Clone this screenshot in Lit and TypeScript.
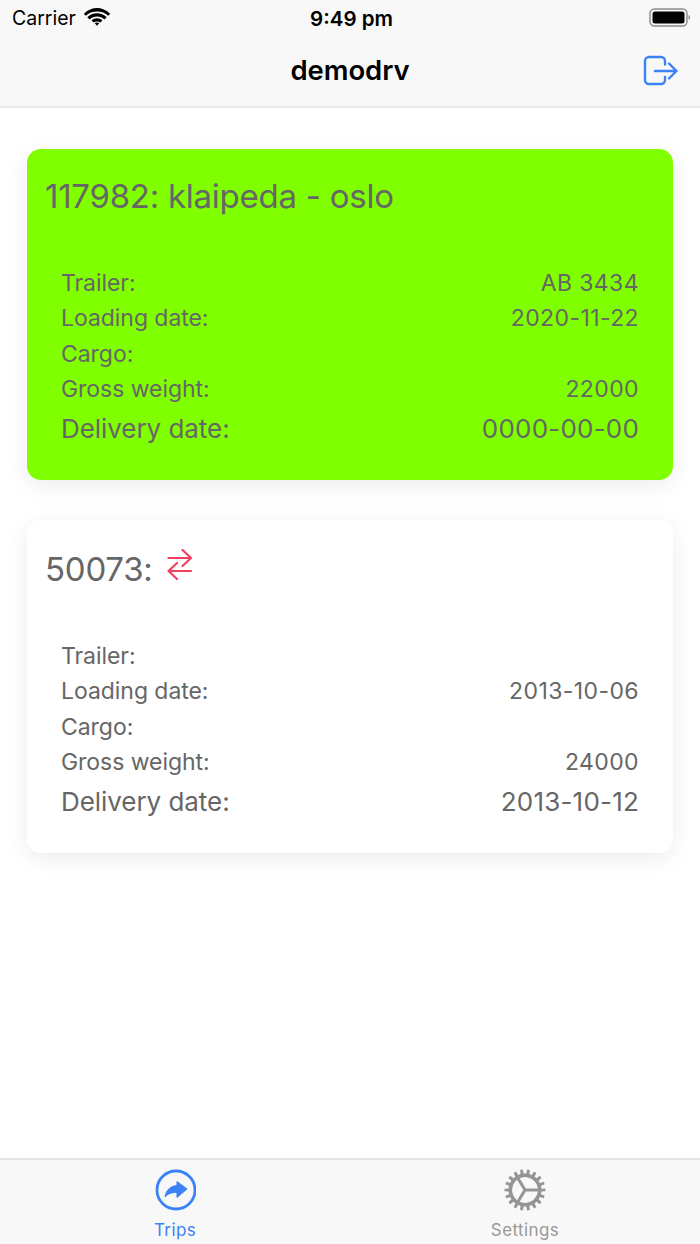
import { LitElement, html, css, svg } from "lit";
import { customElement } from "lit/decorators.js";

interface Trip { title: string; swap?: boolean; green?: boolean; trailer: string; loading: string; cargo: string; gross: string; delivery: string; }

const trips: Trip[] = [
  { title: "117982: klaipeda - oslo", green: true, trailer: "AB 3434", loading: "2020-11-22", cargo: "", gross: "22000", delivery: "0000-00-00" },
  { title: "50073:", swap: true, trailer: "", loading: "2013-10-06", cargo: "", gross: "24000", delivery: "2013-10-12" },
];

function gearPath(): string {
  const cx = 21, cy = 21, n = 18, ro = 20.5, ri = 16.5;
  let d = "";
  for (let i = 0; i < n; i++) {
    const a = (i / n) * Math.PI * 2;
    const w = Math.PI / n;
    const pts: [number, number][] = [
      [ri, a - w * 0.55], [ro, a - w * 0.38], [ro, a + w * 0.38], [ri, a + w * 0.55],
    ];
    for (const [r, t] of pts) {
      d += `${d ? "L" : "M"}${(cx + r * Math.cos(t)).toFixed(2)} ${(cy + r * Math.sin(t)).toFixed(2)}`;
    }
  }
  return d + "Z";
}

@customElement("app-root")
export class AppRoot extends LitElement {
  static styles = css`
    :host { display: flex; flex-direction: column; width: 700px; height: 1244px; background: #fff; font-family: Inter, "Liberation Sans", sans-serif; overflow: hidden; }
    .status { height: 40px; flex: none; background: #f8f8f8; display: grid; grid-template-columns: 1fr auto 1fr; align-items: center; padding: 0 9px 4px 12px; box-sizing: border-box; color: #000; }
    .status-left { display: flex; align-items: center; gap: 8px; font-size: 19.5px; }
    .wifi { margin-top: -2px; }
    .time { font-size: 20.5px; font-weight: 600; }
    .status-right { display: flex; justify-content: flex-end; }
    .battery { margin-top: -1px; }
    .nav { height: 68px; flex: none; box-sizing: border-box; background: #f8f8f8; border-bottom: 2px solid #e8e8e8; display: flex; align-items: center; justify-content: center; position: relative; padding-bottom: 6px; }
    .nav h1 { margin: 0; font-size: 27.5px; font-weight: 600; color: #000; letter-spacing: -0.1px; }
    .logout { position: absolute; right: 21px; top: 15px; }
    .main { flex: 1; display: flex; flex-direction: column; gap: 40px; padding: 41px 27px 0; }
    .card { height: 331px; flex: none; box-sizing: border-box; border-radius: 14px; background: #fff; box-shadow: 0 5px 22px rgba(0,0,0,0.08); padding: 26px 34px 0 18px; color: #666; }
    .card.green { background: #80ff00; }
    .card.plain { height: 333px; padding-top: 27px; }
    .title { margin: 0; height: 42px; display: flex; align-items: center; gap: 14px; font-size: 33px; font-weight: 400; letter-spacing: -0.25px; white-space: nowrap; }
    .card.plain .title { height: 44px; }
    .swap { flex: none; margin-top: -8px; }
    .rows { margin: 48px 0 0 16px; display: flex; flex-direction: column; }
    .card.plain .rows { margin-top: 47px; }
    .row { height: 35.5px; display: flex; justify-content: space-between; align-items: center; font-size: 23px; letter-spacing: -0.05px; }
    .row span:last-child { letter-spacing: 0.4px; }
    .row.big { height: 43px; font-size: 26px; letter-spacing: 0; }
    .row.big span:first-child { letter-spacing: -0.05px; }
    .row.big span:last-child { letter-spacing: 0.2px; }
    .tabs { height: 86px; flex: none; box-sizing: border-box; background: #f8f8f8; border-top: 2px solid #e4e4e4; display: grid; grid-template-columns: 1fr 1fr; }
    .tab { display: flex; flex-direction: column; align-items: center; padding-top: 9px; font-size: 17px; font-weight: 400; letter-spacing: 0.4px; color: #999; }
    .tab.on { color: #3b82f6; }
    .tab svg { display: block; margin-bottom: 9px; }
  `;

  private row(label: string, value: string, big = false) {
    return html`<div class="row ${big ? "big" : ""}"><span>${label}</span><span>${value}</span></div>`;
  }

  render() {
    return html`
      <div class="status">
        <div class="status-left"><span>Carrier</span>
          <svg class="wifi" width="26" height="18" viewBox="0 0 26 18" fill="#000">
            <path d="M13 3.500C8.600 3.500 4.600 5 1.800 7.800L.4 6.400C0 6 0 5.600.4 5.200 3.700 2 8.300 0 13 0s9.300 2 12.600 5.200c.4.4.4.8 0 1.200l-1.400 1.400C21.400 5 17.400 3.500 13 3.500Z"/>
            <path d="M13 8.600c-2.900 0-5.500 1.100-7.500 2.900L3.300 9.200C5.900 6.800 9.300 5.300 13 5.300s7.100 1.500 9.700 3.900l-2.200 2.300C18.500 9.700 15.900 8.600 13 8.600Z"/>
            <path d="M13 10.300c-2.100 0-4 .8-5.400 2.100l2.100 2.200c.9-.7 2-1.100 3.300-1.100s2.400.4 3.300 1.100l2.100-2.200C17 11.100 15.100 10.300 13 10.300Z"/>
            <path d="M13 14.500c-.9 0-1.600.3-2.200.8l2.200 2.400 2.200-2.400c-.6-.5-1.300-.8-2.200-.8Z"/>
          </svg>
        </div>
        <div class="time">9:49 pm</div>
        <div class="status-right">
          <svg class="battery" width="42" height="20" viewBox="0 0 42 20">
            <rect x="1" y="1" width="37" height="17" rx="4.500" fill="none" stroke="#8a8a8a" stroke-width="1.400"/>
            <rect x="3.500" y="3.500" width="32" height="12" rx="2.500" fill="#000"/>
            <path d="M39.500 7v5c1-.4 1.500-1.400 1.500-2.500S40.500 7.400 39.500 7Z" fill="#8a8a8a"/>
          </svg>
        </div>
      </div>
      <div class="nav">
        <h1>demodrv</h1>
        <svg class="logout" width="38" height="32" viewBox="0 0 38 32" fill="none" stroke="#3b82f6" stroke-width="2.400" stroke-linecap="round" stroke-linejoin="round">
          <path d="M24 9.500V6a4 4 0 0 0-4-4H8A4 4 0 0 0 4 6v19a4 4 0 0 0 4 4h12a4 4 0 0 0 4-4v-3"/>
          <path d="M14 16H35.500M28 8.500l7.500 7.500-7.500 7.500"/>
        </svg>
      </div>
      <div class="main">
        ${trips.map((t) => html`
          <section class="card ${t.green ? "green" : "plain"}">
            <h2 class="title"><span>${t.title}</span>
              ${t.swap ? html`<svg class="swap" width="26" height="32" viewBox="0 0 26 32" fill="none" stroke="#f43f5e" stroke-width="2.200" stroke-linecap="round" stroke-linejoin="round">
                <path d="M1.500 9H24M15.500 1 24 9l-8.500 8"/>
                <path d="M24 22H1.500M10 14l-8.500 8 8.500 8"/>
              </svg>` : ""}
            </h2>
            <div class="rows">
              ${this.row("Trailer:", t.trailer)}
              ${this.row("Loading date:", t.loading)}
              ${this.row("Cargo:", t.cargo)}
              ${this.row("Gross weight:", t.gross)}
              ${this.row("Delivery date:", t.delivery, true)}
            </div>
          </section>`)}
      </div>
      <div class="tabs">
        <div class="tab on">
          <svg width="42" height="42" viewBox="0 0 42 42">
            <circle cx="22" cy="21" r="19" fill="none" stroke="#3b82f6" stroke-width="2.800"/>
            <path d="M23 12.500 33 20 23 28.500v-5c-5 0-9 1-12 4.500 1-6.500 5-11 12-11.500Z" fill="#3b82f6" stroke="#3b82f6" stroke-linejoin="round" stroke-width="1"/>
          </svg>
          <span>Trips</span>
        </div>
        <div class="tab">
          <svg width="42" height="42" viewBox="0 0 42 42">
            <path d="${gearPath()}" fill="#959595"/>
            <circle cx="21" cy="21" r="13" fill="#f8f8f8"/>
            ${svg`<g fill="none" stroke="#959595" stroke-width="3"><circle cx="21" cy="21" r="14.500"/><path d="M21 21H36M21 21 13.500 8.500M21 21 13.500 33.500"/></g>`}
          </svg>
          <span>Settings</span>
        </div>
      </div>
    `;
  }
}
